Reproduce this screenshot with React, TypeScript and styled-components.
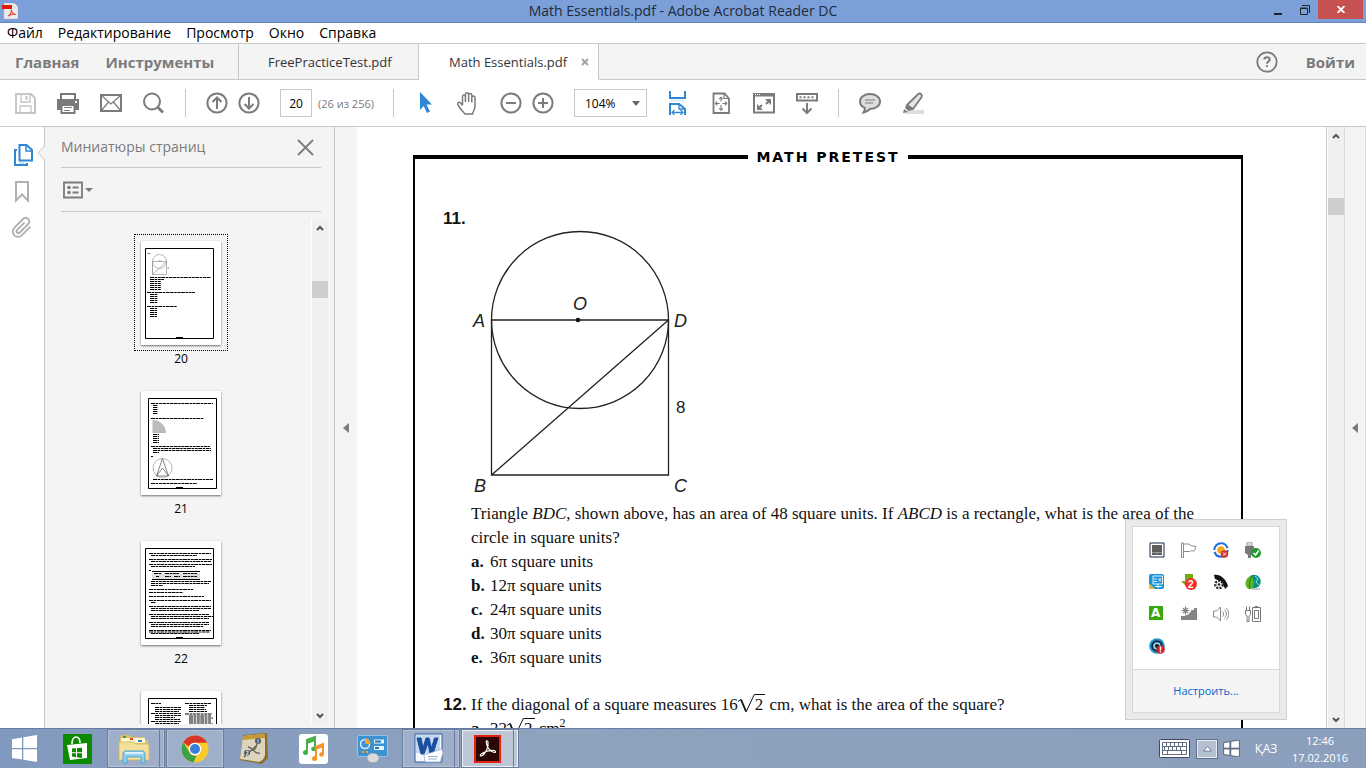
import React from 'react';
import styled, { createGlobalStyle, css } from 'styled-components';

const UI = '"Open Sans", "Noto Sans", sans-serif';
const SANS = '"Liberation Sans", Arial, sans-serif';
const SERIF = '"Liberation Serif", "Times New Roman", serif';
const GRAY = '#7b7b7b';
const LINE = '#c8c8c8';

const GlobalStyle = createGlobalStyle`
  * { box-sizing: border-box; }
  body { margin: 0; font-family: ${UI}; background: #fff; color: #000; }
  button { border: 0; padding: 0; margin: 0; background: none; font: inherit; color: inherit; cursor: pointer; }
  svg { display: block; flex: none; }
`;

const Desktop = styled.div`
  display: flex;
  flex-direction: column;
  height: 100vh;
  position: relative;
  overflow: hidden;
`;

/* ---------- window chrome ---------- */

const TitleBar = styled.header`
  display: grid;
  grid-template-columns: 1fr auto 1fr;
  height: 23px;
  flex: none;
  background: #7a9fd9;
  border-bottom: 1px solid #6283bd;
`;
const AppIcon = styled.div`
  padding: 3px 2px;
`;
const Title = styled.h1`
  margin: 0;
  font-size: 14px;
  line-height: 22px;
  font-weight: 400;
  color: #222b3a;
`;
const WindowButtons = styled.div`
  display: flex;
  justify-content: flex-end;
  padding-right: 3px;
`;
const WindowButton = styled.button<{ $close?: boolean }>`
  display: grid;
  place-items: center;
  width: ${p => (p.$close ? 45 : 27)}px;
  height: 19px;
  background: ${p => (p.$close ? '#c75050' : 'transparent')};
`;

const MenuBar = styled.nav`
  display: flex;
  gap: 15px;
  height: 21px;
  flex: none;
  padding-left: 7px;
  border-bottom: 1px solid ${LINE};
  button { font-size: 14px; line-height: 20px; }
`;

const TabBar = styled.nav`
  display: flex;
  height: 36px;
  flex: none;
  background: #f4f4f4;
`;
const TabHome = styled.div`
  display: flex;
  gap: 26px;
  width: 239px;
  padding-left: 15px;
  border-right: 1px solid ${LINE};
  border-bottom: 1px solid ${LINE};
`;
const TabLink = styled.button`
  font-size: 15px;
  line-height: 20px;
  font-weight: 700;
  color: ${GRAY};
`;
const FileTab = styled.div<{ $active?: boolean }>`
  display: flex;
  align-items: center;
  justify-content: space-between;
  width: 180px;
  padding: 0 9px 0 ${p => (p.$active ? 30 : 29)}px;
  border-right: 1px solid ${LINE};
  border-bottom: 1px solid ${p => (p.$active ? '#fff' : LINE)};
  background: ${p => (p.$active ? '#fff' : 'transparent')};
  font-size: 13px;
  color: #333;
`;
const TabRight = styled.div`
  display: flex;
  flex: 1;
  justify-content: flex-end;
  align-items: center;
  gap: 28px;
  padding-right: 11px;
  border-bottom: 1px solid ${LINE};
`;

/* ---------- toolbar ---------- */

const Toolbar = styled.div`
  display: flex;
  align-items: center;
  gap: 19px;
  height: 47px;
  flex: none;
  padding-left: 13px;
  border-bottom: 1px solid ${LINE};
`;
const Pair = styled.div<{ $tight?: boolean }>`
  display: flex;
  align-items: center;
  gap: ${p => (p.$tight ? 6 : 8)}px;
`;
const Tool = styled.button`
  width: 24px;
  height: 24px;
`;
const Separator = styled.div`
  width: 1px;
  height: 28px;
  background: ${LINE};
`;
const fieldBox = css`
  height: 28px;
  border: 1px solid ${LINE};
  border-radius: 0;
  background: #fff;
  color: #000;
  font-family: ${UI};
  font-size: 12px;
`;
const PageField = styled.input`
  ${fieldBox}
  width: 32px;
  padding: 0;
  text-align: center;
`;
const PageCount = styled.label`
  font-size: 11px;
  width: 56px;
  white-space: nowrap;
  color: ${GRAY};
`;
const ZoomBox = styled.div`
  display: grid;
  align-items: center;
  width: 73px;
  select, svg { grid-area: 1 / 1; }
  svg { justify-self: end; margin-right: 7px; pointer-events: none; }
`;
const ZoomSelect = styled.select`
  ${fieldBox}
  appearance: none;
  width: 73px;
  padding: 0 10px;
`;

/* ---------- work area ---------- */

const WorkArea = styled.main`
  display: flex;
  flex: 1;
  min-height: 0;
`;
const Rail = styled.nav`
  display: flex;
  flex-direction: column;
  align-items: center;
  gap: 12px;
  width: 45px;
  padding-top: 16px;
  border-right: 1px solid ${LINE};
  position: relative;
  button { width: 24px; height: 24px; }
`;
const Notch = styled.svg`
  position: absolute;
  right: -1px;
  top: 18px;
`;
const Panel = styled.aside`
  display: flex;
  flex-direction: column;
  width: 290px;
  background: #f4f4f4;
  border-right: 1px solid ${LINE};
`;
const PanelHead = styled.div`
  display: flex;
  align-items: center;
  justify-content: space-between;
  height: 41px;
  flex: none;
  margin: 0 13px 0 16px;
  padding-right: 7px;
  border-bottom: 1px solid ${LINE};
`;
const PanelTitle = styled.h2`
  margin: 0;
  font-size: 14px;
  line-height: 20px;
  font-weight: 400;
  color: ${GRAY};
`;
const PanelTools = styled.div`
  display: flex;
  align-items: center;
  height: 44px;
  flex: none;
  margin: 0 13px 0 16px;
  border-bottom: 1px solid ${LINE};
`;
const PanelBody = styled.div`
  display: flex;
  flex: 1;
  min-height: 0;
  margin: 7px 6px 4px;
`;
const ThumbList = styled.ol`
  display: flex;
  flex-direction: column;
  align-items: center;
  gap: 17px;
  flex: 1;
  margin: 0;
  padding: 15px 0 0;
  list-style: none;
  overflow: hidden;
`;
const ThumbItem = styled.li`
  display: flex;
  flex-direction: column;
  align-items: center;
  flex: none;
  font-size: 12px;
  line-height: 16px;
`;
const ThumbFrame = styled.button<{ $current?: boolean }>`
  display: grid;
  place-items: center;
  width: 94px;
  height: 117px;
  border: 1px dotted ${p => (p.$current ? '#000' : 'transparent')};
`;
const Sheet = styled.svg`
  background: #fff;
  box-shadow: 0 1px 2px rgba(0, 0, 0, 0.55);
`;

const ScrollTrack = styled.div`
  display: flex;
  flex-direction: column;
  align-items: center;
  width: 17px;
  background: #f0f0f0;
  border-left: 1px solid #fff;
`;
const ScrollButton = styled.button`
  display: grid;
  place-items: center;
  width: 16px;
  height: 17px;
`;
const ScrollThumb = styled.div<{ $offset: number }>`
  width: 16px;
  height: 17px;
  margin: ${p => p.$offset}px 0 auto;
  background: #cdcdcd;
`;
const Splitter = styled.button<{ $framed?: boolean }>`
  display: grid;
  place-items: center;
  width: 22px;
  background: #f4f4f4;
  border: solid #dadada;
  border-width: ${p => (p.$framed ? '0 1px' : '0')};
`;

/* ---------- document page ---------- */

const Page = styled.article`
  flex: 1;
  min-width: 0;
  padding: 28px 83px 0 56px;
  overflow: hidden;
  border-right: 1px solid ${LINE};
  display: flex;
  flex-direction: column;
`;
const RunningHead = styled.div`
  display: flex;
  align-items: center;
  gap: 8px;
  height: 4px;
  flex: none;
  &::before, &::after { content: ''; flex: 1; height: 4px; background: #000; }
`;
const RunningTitle = styled.h2`
  margin: 0;
  font: bold 14px/20px "DejaVu Sans", sans-serif;
  letter-spacing: 2px;
`;
const Frame = styled.div`
  flex: 1;
  border: solid #000;
  border-width: 0 2px;
  padding: 48px 26px 0 28px;
`;
const Question = styled.section`
  display: grid;
  grid-template-columns: 28px 1fr;
  margin-bottom: 23px;
  font: 17px/24px ${SERIF};
  color: #111;
`;
const QuestionNumber = styled.div`
  font: bold 17px/24px ${SANS};
`;
const Figure = styled.svg`
  margin-top: 21px;
`;
const QuestionText = styled.p`
  margin: 0;
`;
const Answers = styled.ol`
  margin: 0;
  padding: 0;
  list-style: none;
`;
const Answer = styled.li`
  display: grid;
  grid-template-columns: 19px 1fr;
`;
const Radical = styled.span`
  white-space: nowrap;
  svg { display: inline-block; vertical-align: -3px; }
  span { border-top: 1px solid #111; padding-right: 2px; }
`;
const Power = styled.sup`
  font-size: 12px;
  line-height: 0;
`;

/* ---------- notification flyout ---------- */

const Flyout = styled.div`
  position: absolute;
  right: 79px;
  bottom: 48px;
  width: 162px;
  padding: 6px;
  background: #eaeaea;
  border: 1px solid #cfcfcf;
`;
const FlyoutInner = styled.div`
  background: #fff;
  border: 1px solid #d9d9d9;
`;
const IconGrid = styled.div`
  display: grid;
  grid-template-columns: repeat(4, 16px);
  grid-auto-rows: 16px;
  gap: 16px;
  padding: 15px 15px 15px 16px;
  button { width: 16px; height: 16px; }
`;
const FlyoutFoot = styled.div`
  display: grid;
  place-items: center;
  height: 43px;
  background: #f4f4f4;
  border-top: 1px solid #d9d9d9;
  a { font-size: 11px; line-height: 16px; color: #06c; text-decoration: none; }
`;

/* ---------- taskbar ---------- */

const Taskbar = styled.footer`
  display: flex;
  height: 40px;
  flex: none;
  background: linear-gradient(90deg, #8299bf, #8fa2be 40%, #8b9fbd);
  border-top: 1px solid #657da4;
`;
const StartButton = styled.button`
  display: grid;
  place-items: center;
  width: 48px;
`;
const Apps = styled.div`
  display: flex;
  flex: 1;
  gap: 1px;
`;
const AppButton = styled.button<{ $running?: boolean; $active?: boolean }>`
  display: flex;
  width: 58px;
  ${p => p.$running && css`
    background: ${p.$active ? '#bcc6d5' : '#9fafc9'};
    border: 1px solid #6a7d9c;
    box-shadow: inset 0 0 0 1px ${p.$active ? '#edf1f6' : '#b5c2d6'};
  `}
`;
const AppFace = styled.span<{ $stacked?: boolean }>`
  display: grid;
  place-items: center;
  flex: 1;
  height: 100%;
  margin-right: ${p => (p.$stacked ? 4 : 0)}px;
  border-right: ${p => (p.$stacked ? '1px solid #6a7d9c' : '0')};
`;
const Tray = styled.div`
  display: flex;
  align-items: center;
  padding-right: 18px;
  color: #fff;
  font-size: 12px;
  line-height: 17px;
`;
const TrayItem = styled.button<{ $w: number }>`
  display: grid;
  place-items: center;
  width: ${p => p.$w}px;
  height: 39px;
`;
const TrayUp = styled.span`
  display: grid;
  place-items: center;
  width: 22px;
  height: 20px;
  background: #b5c0d0;
  border: 1px solid #5f7190;
  box-shadow: inset 0 0 0 1px #e9edf3;
`;
const Clock = styled.button`
  width: 56px;
  font-size: 11px;
  text-align: center;
  white-space: nowrap;
`;

/* ---------- drawings ---------- */

type IconProps = { children: React.ReactNode; s?: number; stroke?: string };
const Ico = ({ children, s = 24, stroke = GRAY }: IconProps) => (
  <svg width={s} height={s} viewBox={`0 0 ${s} ${s}`} fill="none" stroke={stroke} strokeWidth="2" aria-hidden="true">
    {children}
  </svg>
);

const Chevron = ({ down }: { down?: boolean }) => (
  <svg width="8" height="6" viewBox="0 0 8 6" fill="none" stroke="#555" strokeWidth="2" aria-hidden="true">
    <path d={down ? 'M1 1l3 3 3-3' : 'M1 5l3-3 3 3'} />
  </svg>
);
const LeftCaret = () => (
  <svg width="6" height="10" viewBox="0 0 6 10" aria-hidden="true"><path d="M6 0v10L0 5z" fill="#7b7b7b" /></svg>
);

const PdfMini = () => (
  <svg width="16" height="16" viewBox="0 0 16 16" aria-hidden="true">
    <path d="M2 0h10l4 4v12H2z" fill="#ecebea" stroke="#c9c5c3" strokeWidth=".6" />
    <path d="M12 0v4h4z" fill="#fff" stroke="#bbb" strokeWidth=".5" />
    <path d="M0 2h10v4H0z" fill="#e11b0c" />
    <path d="M6 13c2-1 3.500-4 3.300-6.500M9.300 6.500C9.500 9 11 11 14 11.500M6 13c2-1.500 5-2 8-1.500" stroke="#e0453a" fill="none" strokeWidth="1.100" />
  </svg>
);

const SaveIcon = () => (
  <Ico stroke="#c6c6c6"><path d="M3 3h15l4 4v15H3z" /><path d="M8 3v8h9V3M7 22v-7h11v7" strokeWidth="1.300" /><path d="M13.500 5v4" /></Ico>
);
const PrintIcon = () => (
  <Ico><path d="M5 8V3h14v5" /><path d="M1 8h22v11h-4v-3H5v3H1z" fill={GRAY} stroke="none" /><path d="M5.500 14h13v8h-13z" fill="#fff" /><path d="M8 16.500h8M8 19.500h6" strokeWidth="1" /><path d="M19 11h2" stroke="#fff" /></Ico>
);
const MailIcon = () => (
  <Ico><path d="M2 4h20v16H2z" /><path d="M2.500 4.500L12 13l9.500-8.500M2.500 19.500l7-8.500M21.500 19.500l-7-8.500" strokeWidth="1.200" /></Ico>
);
const SearchIcon = () => (
  <Ico><circle cx="10" cy="10.500" r="8" /><path d="M15.500 16l5.500 5.500" strokeWidth="2.800" /></Ico>
);
const CircleIcon = ({ d }: { d: string }) => (
  <Ico><circle cx="12" cy="12" r="9.600" /><path d={d} /></Ico>
);
const PointerIcon = () => (
  <svg width="24" height="24" viewBox="0 0 24 24" aria-hidden="true"><path d="M7 1l12 12.500h-5.500l3.500 7-3 1.500-3.300-7L7 19z" fill="#2f86d2" /></svg>
);
const HandIcon = () => (
  <Ico>
    <path d="M7.500 14V5.500c0-2 2.900-2 2.900 0V11M10.400 11V3.500c0-2.200 3.200-2.200 3.200 0V11M13.600 11V4c0-2 3.200-2 3.200 0v7.500M16.800 11.500V6.500c0-2 3.200-2 3.200 0V15c0 3.500-1.500 4.500-2.500 8H10c-2-2-4.500-5-7-9-1.300-2.600 1.600-3.300 2.700-2L7.500 14.500" transform="translate(-1 0)" strokeWidth="1.500" />
  </Ico>
);
const FitWidthIcon = () => (
  <Ico stroke="#2f86d2"><path d="M4 0v7h15V0M4 24V13h9l6 5v6" /><path d="M13 13v5h6M7 21.500h9" strokeWidth="1.300" /><path d="M8.500 19L6 21.500 8.500 24M14.500 19l2.500 2.500-2.500 2.500" strokeWidth="1.200" /><path d="M4 9.500h15" stroke="#dcebf7" /></Ico>
);
const FitPageIcon = () => (
  <Ico><path d="M4.500 2.500h11l4.500 5v14.500H4.500z" strokeWidth="1.800" /><path d="M15 2.500v5h5" strokeWidth="1.200" /><path d="M12 6.500v4M12 14v5M6.500 12.500h4M13.500 12.500h4.500M10.200 8.200L12 6.400l1.800 1.800M10.200 17.300l1.800 1.800 1.800-1.800M8.200 10.700l-1.800 1.800 1.800 1.800M16 10.700l1.800 1.800-1.800 1.800" strokeWidth="1.100" /></Ico>
);
const FullScreenIcon = () => (
  <Ico><path d="M2 3h20v18.500H2z" /><path d="M2 4h20" strokeWidth="3" /><path d="M3 3.500h5" stroke="#fff" strokeWidth="1" strokeDasharray="1 1" /><path d="M13 8h6v6zM5 13v6h6z" fill={GRAY} stroke="none" /><path d="M17 10l-3 3M7 17l3-3" /></Ico>
);
const ReadIcon = () => (
  <Ico><path d="M2 3h20v6.500H2z" /><path d="M4.500 6.200h15" strokeDasharray="2 2" /><path d="M12 12v10M7.500 17.500L12 22l4.500-4.500" /></Ico>
);
const CommentIcon = () => (
  <Ico><path d="M12 3c6 0 10 3.300 10 7.500S18 18 12 18c-1.500 1.500-3.500 3-6.500 3.500 1-1.500 1.500-3 1.300-4.500C3.500 15.500 2 13 2 10.500 2 6.300 6 3 12 3z" fill="#dedede" /><path d="M7 9h10M7 12h8" strokeWidth="1.200" /></Ico>
);
const HighlightIcon = () => (
  <Ico><path d="M6 19h17v4H4z" fill="#dedede" stroke="none" /><path d="M6 14L17.500 2.800c1.500-1 4.500 1 3 3.500L12 18z" fill="#e6e6e6" strokeWidth="1.800" /><path d="M6 13.500l6 4.500-4 1.500-3.500-2.500z" fill={GRAY} strokeWidth="1" /><path d="M3 18l4 3-5 1z" fill={GRAY} stroke="none" /></Ico>
);

const PagesIcon = () => (
  <Ico stroke="#2f86d2"><path d="M9.500 2h7l5.500 5v10.500H9.500z" /><path d="M16 2v6h6" strokeWidth="1.500" /><path d="M7 7H5v15h12v-2" /><path d="M9 20h5" stroke="#cfe2f3" /></Ico>
);
const BookmarkIcon = () => <Ico stroke="#b0b0b0"><path d="M6 3h12v18.500l-6-6-6 6z" /></Ico>;
const ClipIcon = () => (
  <Ico stroke="#b0b0b0"><path d="M20.400 11.700l-8.600 8.600a5.300 5.300 0 0 1-7.500-7.500L13 4a3.600 3.600 0 0 1 5.200 5L9.800 17.500a1.800 1.800 0 0 1-2.600-2.600l7.300-7.300" strokeWidth="1.900" /></Ico>
);

/* Miniature pages: words are dashes, each entry is [x, y, length]. */
const Words = ({ rows, w = 1 }: { rows: number[][]; w?: number }) => (
  <g stroke="#000" strokeWidth={w} strokeDasharray="4 .6 2.500 .7 3 .5">
    {rows.map(([x, y, l], i) => <path key={i} d={`M${x} ${y}h${l}`} />)}
  </g>
);
const shortRows = (y: number, n: number, x: number, l: number) =>
  Array.from({ length: n }, (_, i) => [x, y + i * 2, l]);

const ThumbPage = ({ n }: { n: number }) => {
  const odd = n % 2 === 1;
  const fx = odd ? 7 : 4;
  return (
    <Sheet width="80" height="104" viewBox="0 0 80 104" aria-hidden="true">
      <path d={`M${fx}.500 7.500h68v90h-68z`} fill="none" stroke="#000" />
      <path d="M35 97h7" stroke="#000" strokeWidth="2" />
      {n === 20 && (
        <g>
          <g fill="none" stroke="#999" strokeWidth=".7"><circle cx="18.500" cy="20.500" r="7" /><path d="M11.500 20.500h14v13h-14zl0 13 14-13" /></g>
          <path d="M6.500 12.500h3M18 20h1.500M26.500 27h1.500" stroke="#777" />
          <Words rows={[[9, 36.5, 61], [9, 38.5, 14], ...shortRows(40.5, 5, 9, 11), [6, 51.5, 48], ...shortRows(53.5, 5, 9, 8), [6, 65.5, 30], ...shortRows(67.5, 5, 9, 7)]} />
        </g>
      )}
      {n === 21 && (
        <g>
          <Words rows={[[10, 12.5, 62], ...shortRows(14.500, 5, 12, 5), [10, 27.5, 53], ...shortRows(43.5, 5, 12, 6), [10, 55.5, 59], [12, 57.5, 58], [12, 59.5, 58], [12, 61.5, 6], [10, 65.5, 2], [12, 88.5, 60], [10, 92.5, 46]]} />
          <path d="M11.500 42V29c8 0 13.500 6 13.500 13z" fill="#bbb" />
          <g fill="none" stroke="#999" strokeWidth=".7"><circle cx="21.500" cy="77" r="9.500" /><path d="M21.500 67.500l-6 17.500h12zM21.500 77l-6 8M21.500 77l6 8" stroke="#555" /></g>
        </g>
      )}
      {n === 22 && (
        <g>
          <Words rows={[[8, 12.5, 62], [10, 14.5, 46], [8, 18.5, 63], [10, 20.5, 60], [8, 23.5, 63], [10, 25.5, 44], [8, 29.5, 2], [10, 40.5, 60], [10, 42.500, 58], [10, 44.500, 12], [8, 48.5, 44], [8, 51.5, 34], [8, 55.5, 55], [8, 59.5, 62], [10, 61.5, 5], [8, 65.5, 62], [10, 67.5, 60], [10, 69.5, 48], [8, 73.5, 60], [10, 75.5, 62], [10, 77.5, 58], [8, 81.5, 60], [10, 83.5, 58], [10, 85.5, 53], [8, 89.5, 62], [8, 91, 61], [10, 92.5, 48]]} />
          <path d="M11 30.500h48M11 38.500h48" stroke="#000" />
          <path d="M11 32h48v6H11z" fill="#ddd" />
          <Words rows={[[13, 32.5, 8], [24, 32.5, 14], [42, 32.5, 14], [15, 35.500, 3], [24, 35.500, 6], [33, 35.500, 6], [42, 35.500, 14]]} />
        </g>
      )}
      {n === 23 && (
        <Words rows={[[10, 12.5, 10], [14, 16.5, 26], [14, 18.5, 26], [14, 20.5, 24], [10, 22.5, 30], [14, 24.500, 26], [14, 26.5, 20], [14, 28.5, 25], [10, 30.5, 30], [14, 32.5, 24], [44, 12.500, 26], [48, 14.500, 18], [48, 16.5, 16], [48, 18.5, 17], [48, 20.5, 18], [44, 23, 27], [48, 25, 22], [48, 27, 24], [48, 29, 22], [48, 31, 22], [48, 33, 24]]} w={1.2} />
      )}
    </Sheet>
  );
};

const RectangleFigure = () => (
  <Figure width="220" height="274" viewBox="0 0 220 274" role="img" aria-label="Circle O over rectangle ABCD">
    <g fill="none" stroke="#222" strokeWidth="1.300">
      <circle cx="109" cy="92" r="88.500" />
      <path d="M20.500 92h177v155h-177zM197.500 92L20.500 247" />
    </g>
    <circle cx="107" cy="92" r="2.300" fill="#111" />
    <g fontFamily={SANS} fontSize="18" fontStyle="italic" fill="#222">
      <text x="2" y="99">A</text>
      <text x="102" y="82">O</text>
      <text x="203" y="99">D</text>
      <text x="3" y="264">B</text>
      <text x="203" y="264">C</text>
      <text x="205" y="185" fontStyle="normal" fontSize="17">8</text>
    </g>
  </Figure>
);

const Sqrt = ({ children }: { children: React.ReactNode }) => (
  <Radical>
    <svg width="17" height="19" viewBox="0 0 17 19" fill="none" stroke="#111" aria-hidden="true">
      <path d="M0 7.500l3-2" /><path d="M3 5.500l5 12" strokeWidth="1.800" /><path d="M8 18L16.300.500h1" />
    </svg>
    <span>{children}</span>
  </Radical>
);

const WindowsLogo = ({ s = 27, edge }: { s?: number; edge?: boolean }) => (
  <svg width={s} height={s} viewBox="0 0 27 27" fill="#fff" stroke={edge ? '#4c5a70' : 'none'} strokeWidth={edge ? 1.4 : 0} aria-hidden="true">
    <path d="M1 4.200l10-1.700V13H1zM12.300 2.300L26 0v13H12.300zM1 14.200h10v10.400L1 23zM12.300 14.200H26V27l-13.700-2.200z" />
  </svg>
);
const StoreIcon = () => (
  <svg width="29" height="30" viewBox="0 0 29 30" aria-hidden="true">
    <path d="M0 0h29v30H0z" fill="#0c8a00" />
    <path d="M4 11l20-2v15L7 26z" fill="#fff" /><path d="M9 10c0-5 2-7 4-7s4 2 4 6" fill="none" stroke="#fff" strokeWidth="1.600" />
    <path d="M9 14.500l4-.3v4H9zM14 14.100l5-.4v4.500h-5zM9 19.200h4v4l-4-.6zM14 19.200h5V24l-5-.7z" fill="#0c8a00" />
  </svg>
);
const ExplorerIcon = () => (
  <svg width="32" height="30" viewBox="0 0 32 30" aria-hidden="true">
    <path d="M2 3l2-2h7l2 2h13v3h4v20H2z" fill="#dfc068" />
    <path d="M3 4h24v5H3z" fill="#fff6d0" /><path d="M5 2h3v2H5z" fill="#2ba84a" /><path d="M12 4h3v2h-3z" fill="#d8442e" /><path d="M20 6h4v2h-4z" fill="#2f86d2" />
    <path d="M1 8h14l3 2h13v16H1z" fill="#f3e09a" stroke="#d2b25a" strokeWidth=".8" />
    <path d="M5 29V20c0-2 1-3 3-3h16c2 0 3 1 3 3v9h-4v-6H9v6z" fill="#8fd0ee" stroke="#4fa4cd" /><path d="M7 19h18" stroke="#d8f1fb" strokeWidth="2" />
  </svg>
);
const ChromeIcon = () => (
  <svg width="28" height="28" viewBox="0 0 28 28" aria-hidden="true">
    <circle cx="14" cy="14" r="13.500" fill="#f7cb2d" />
    <path d="M2.300 7.300A13.500 13.500 0 0 1 26 7.700H14a6.500 6.500 0 0 0-6 4z" fill="#d9352a" />
    <path d="M2.300 7.300l5.900 9.700A6.500 6.500 0 0 0 15.500 20.500L12.500 27.400A13.500 13.500 0 0 1 2.300 7.300z" fill="#3aa24a" />
    <circle cx="14" cy="14" r="6.300" fill="#fff" /><circle cx="14" cy="14" r="5" fill="#3b7fd9" />
  </svg>
);
const JournalIcon = () => (
  <svg width="30" height="31" viewBox="0 0 30 31" aria-hidden="true">
    <path d="M4 2l24-2 1 25-6 6-22-4z" fill="#8d6d27" />
    <path d="M4 3l22-2v21c-1 4-3 6-6 7L1 26z" fill="#dcd4bd" /><path d="M4 3l22-2v4L4 7z" fill="#c59a35" />
    <path d="M5 24l13-12M9 14c5 0 6 8 12 6M8 20c5-6 7 2 10-9" fill="none" stroke="#68645b" strokeWidth="1.300" />
    <circle cx="19" cy="8" r="3" fill="#4b5a66" /><circle cx="8" cy="20" r="3" fill="#4b5a66" />
    <path d="M19 6v4M7 19l2-1v2l-2 2h3" stroke="#fff" fill="none" strokeWidth=".8" />
  </svg>
);
const MusicIcon = () => (
  <svg width="29" height="30" viewBox="0 0 29 30" aria-hidden="true">
    <rect width="29" height="30" rx="3" fill="#fff" />
    <path d="M8 18V6l8-3v11" fill="none" stroke="#44b04a" strokeWidth="2" /><path d="M8 7l8-3v3l-8 3z" fill="#44b04a" /><circle cx="6.500" cy="18.500" r="2.500" fill="#44b04a" /><circle cx="14.500" cy="15" r="2.300" fill="#44b04a" />
    <path d="M17 24V13l7-3v10" fill="none" stroke="#f5922b" strokeWidth="2" /><path d="M17 13l7-3v3l-7 3z" fill="#f5922b" /><circle cx="15.500" cy="24.500" r="2.500" fill="#f5922b" /><circle cx="22.500" cy="20.500" r="2.300" fill="#f5922b" />
  </svg>
);
const ControlIcon = () => (
  <svg width="31" height="28" viewBox="0 0 31 28" aria-hidden="true">
    <rect x=".5" y=".5" width="30" height="21" rx="1.500" fill="#3d92cf" stroke="#8cc8ee" />
    <circle cx="8" cy="9" r="4.500" fill="none" stroke="#d5edfb" strokeWidth="1.500" /><path d="M8 9V3a6 6 0 0 1 5.500 6z" fill="#f2a33a" />
    <path d="M17 6.500h10M17 13h10" stroke="#e5f5ff" strokeWidth="4" /><path d="M18 6.500h6M18 13h4" stroke="#2674b0" strokeWidth="2" />
    <path d="M5 17h2M9 17h2" stroke="#f2a33a" strokeWidth="2" />
    <ellipse cx="16" cy="23" rx="6" ry="4.800" fill="#d9dadc" stroke="#9ea2a8" strokeWidth=".7" />
  </svg>
);
const WordIcon = () => (
  <svg width="30" height="31" viewBox="0 0 30 31" aria-hidden="true">
    <path d="M1 1h27v28H1z" fill="#f6f9fd" stroke="#2c5fa5" /><path d="M2 2h24v18H2z" fill="#c3d7f1" />
    <path d="M3 5l4 16h3l4-11 2 11h3L24 5h-3.500l-3 10L15 5h-3L9 15 7 5z" fill="#1a4f9d" stroke="#1a4f9d" />
    <path d="M10 22l18-6 1 4-3 9H11z" fill="#fff" stroke="#8aa4c8" strokeWidth=".7" /><path d="M14 23.500h10M14 26h9" stroke="#9bb2d2" />
  </svg>
);
const AcrobatIcon = () => (
  <svg width="27" height="28" viewBox="0 0 27 28" aria-hidden="true">
    <path d="M0 0h27v28H0z" fill="#e8210f" /><path d="M2 2h23v24H2z" fill="#2b0705" />
    <path d="M7 21c4-1 8-9 7-14-.4-1.600-2-1.400-1.800.3C12.700 12 16 17 20.500 17.500c1.500 0 1.400-1.800-.5-2-4-.3-9 1-12.500 3.200-1.500 1-1.600 2.300-.5 2.300z" fill="none" stroke="#fff" strokeWidth="1.200" />
  </svg>
);

const TRAY_ICONS: { name: string; art: React.ReactNode }[] = [
  { name: 'Touchpad', art: <g><path d="M1 1h14v14H1z" fill="#fff" stroke="#142840" strokeWidth="1" /><path d="M3 3h10v10H3z" fill="#5d5d5d" /><path d="M3 10.500h10M8 10.500V13" stroke="#999" strokeWidth="1" /></g> },
  { name: 'Action center', art: <path d="M.500 1h2v14.500h-2zM2.500 2h5.500c1 2 4 2 7 2.500-1 1-.5 4-2 4.500-2 0-3-.5-4.500.500h-6" fill="#fff" stroke="#8c8c8c" /> },
  { name: 'Sync', art: <g><circle cx="8" cy="8" r="6.700" fill="#fff" stroke="#1b6fd8" strokeWidth="2" strokeDasharray="19 2" /><circle cx="8" cy="8" r="3.800" fill="#f9a51b" /><circle cx="11.500" cy="12" r="3.800" fill="#d22f2f" /><path d="M10 10.500l3 3M13 10.500l-3 3" stroke="#fff" /></g> },
  { name: 'Safely remove', art: <g><path d="M2 0h5v4H2z" fill="#ddd" stroke="#888" strokeWidth=".7" /><path d="M0 4h9v7l-3 2v3H3v-3l-3-2z" fill="#777" /><circle cx="11" cy="11" r="5" fill="#1f9a2f" /><path d="M8.500 11l2 2 3.300-4.500" fill="none" stroke="#fff" strokeWidth="1.600" /></g> },
  { name: 'Graphics', art: <g><rect width="15" height="15" rx="2" fill="#1593dd" /><path d="M0 9l6 6H2a2 2 0 0 1-2-2z" fill="#f0b840" /><path d="M4 2h9.500v8H4zM5 5h3M5 7.500h3M9.500 4l2.500 3.500M12 4L9.500 7.500M6 12.500h7M9 10v4" stroke="#fff" fill="none" strokeWidth=".9" /></g> },
  { name: 'Downloads', art: <g><path d="M4 0h8v7H4z" fill="#6fae0c" /><path d="M0 7h14l-7 7z" fill="#6fae0c" /><circle cx="10" cy="10" r="6" fill="#fb2b2b" /><text x="7" y="13.500" fill="#fff" fontSize="10" fontWeight="700" fontFamily={SANS}>2</text></g> },
  { name: 'Phone', art: <g><path d="M1 1c6-1 12 4 14 11l-3 3C11 10 6 6 2 5z" fill="#111" /><circle cx="6" cy="10.500" r="3.700" fill="#fff" stroke="#222" strokeWidth="2.400" strokeDasharray="2 1.200" /><circle cx="6" cy="10.500" r="1.300" fill="#222" /></g> },
  { name: 'Antivirus', art: <g><circle cx="9" cy="7.500" r="6.800" fill="#0f8f8a" /><path d="M10 2l3 3-2 3 3 3" stroke="#8fe3c8" fill="none" /><path d="M7 2c-8 1-8 12-3 13 5 0 6-6 3-13z" fill="#5ab51e" /><path d="M7 2C4 8 4 12 5 15" stroke="#2c7a0b" fill="none" /><path d="M6 15h9" stroke="#9a9a9a" /></g> },
  { name: 'Language', art: <g><path d="M0 0h14v14H0z" fill="#38a80b" /><text x="2" y="11" fill="#fff" fontSize="12" fontWeight="700" fontFamily='"DejaVu Sans", sans-serif'>A</text></g> },
  { name: 'Network', art: <g><path d="M0 10h4V8h3V6h3V4h3V2h3v12H0z" fill="#858585" /><circle cx="4.500" cy="4.500" r="4.800" fill="#fff" /><path d="M4.500.500v8M.500 4.500h8M2 2l5 5M7 2L2 7" stroke="#858585" strokeWidth="1.200" /></g> },
  { name: 'Volume', art: <path d="M.500 5h3l4-4v14l-4-4h-3zM9.500 5.500c1.500 1.500 1.500 3.500 0 5M11.500 3.500c2.500 3 2.500 6 0 9M13.500 2c3 4 3 8 0 12" fill="none" stroke="#8c8c8c" /> },
  { name: 'Power', art: <g fill="#fff" stroke="#777"><path d="M7.500 1.500h8v14h-8zM9.500 4.500h4v8h-4zM10 .500h3" /><path d="M.500 4.500h5v4l-1.500 1.500v5.500H2V10L.500 8.500zM1.500.500v4M4.500.500v4" /></g> },
  { name: 'Security', art: <g><circle cx="8" cy="8" r="7.800" fill="#2497c8" /><circle cx="8" cy="8" r="5.200" fill="#8bdcf7" /><circle cx="8" cy="8" r="4.800" fill="none" stroke="#0a2540" strokeWidth="2" /><circle cx="8" cy="8" r="2" fill="#051520" /><circle cx="11.500" cy="11.500" r="4.300" fill="#cf2424" /><path d="M11.500 8.500v4M11.500 13.300v1.200" stroke="#fff" strokeWidth="1.500" /></g> },
];

const KeyboardTray = () => (
  <svg width="31" height="19" viewBox="0 0 31 19" aria-hidden="true">
    <rect x=".5" y=".5" width="30" height="18" rx="1" fill="#fff" stroke="#3d4a5f" />
    <path d="M3.500 3.500h24v12h-24zM3.500 7.500h24M3.500 11.500h24M7.500 3.500v4M11.500 3.500v4M15.500 3.500v4M19.500 3.500v4M23.500 3.500v4M5.500 7.500v4M9.500 7.500v4M13.500 7.500v4M17.500 7.500v4M21.500 7.500v4M8.500 11.500v4M22.500 11.500v4" fill="none" stroke="#5f6b80" />
  </svg>
);

const APPS = [
  { name: 'Store', icon: <StoreIcon /> },
  { name: 'Explorer', icon: <ExplorerIcon />, running: true, stacked: true },
  { name: 'Chrome', icon: <ChromeIcon />, running: true },
  { name: 'Journal', icon: <JournalIcon /> },
  { name: 'Music', icon: <MusicIcon /> },
  { name: 'Control panel', icon: <ControlIcon /> },
  { name: 'Word', icon: <WordIcon />, running: true, stacked: true },
  { name: 'Acrobat Reader', icon: <AcrobatIcon />, running: true, stacked: true, active: true },
];

const THUMBS = [
  { page: 20, label: '20' },
  { page: 21, label: '21' },
  { page: 22, label: '22' },
  { page: 23 },
];

const OPTIONS = [['a', '6'], ['b', '12'], ['c', '24'], ['d', '30'], ['e', '36']];

export default function App() {
  return (
    <Desktop>
      <GlobalStyle />
      <TitleBar>
        <AppIcon><PdfMini /></AppIcon>
        <Title>Math Essentials.pdf - Adobe Acrobat Reader DC</Title>
        <WindowButtons>
          <WindowButton aria-label="Minimize"><svg width="8" height="14" viewBox="0 0 8 14"><path d="M0 10h8v2H0z" fill="#222" /></svg></WindowButton>
          <WindowButton aria-label="Restore"><svg width="10" height="10" viewBox="0 0 10 10" fill="none" stroke="#222"><path d="M.500 3.500h7v6h-7zM.500 3h7M2 .500h7.500V8" /></svg></WindowButton>
          <WindowButton $close aria-label="Close"><svg width="8" height="7" viewBox="0 0 8 7" stroke="#fff" strokeWidth="1.800"><path d="M.500 0l7 7M7.500 0l-7 7" /></svg></WindowButton>
        </WindowButtons>
      </TitleBar>
      <MenuBar>
        {['Файл', 'Редактирование', 'Просмотр', 'Окно', 'Справка'].map(m => <button key={m}>{m}</button>)}
      </MenuBar>
      <TabBar>
        <TabHome>
          <TabLink>Главная</TabLink>
          <TabLink>Инструменты</TabLink>
        </TabHome>
        <FileTab><button>FreePracticeTest.pdf</button></FileTab>
        <FileTab $active>
          <button>Math Essentials.pdf</button>
          <button aria-label="Close tab"><svg width="8" height="8" viewBox="0 0 8 8" stroke="#a3a3a3" strokeWidth="2"><path d="M1 1l6 6M7 1L1 7" /></svg></button>
        </FileTab>
        <TabRight>
          <button aria-label="Help">
            <Ico s={22}><circle cx="11" cy="11" r="9.700" strokeWidth="1.800" /><path d="M8.300 8.600c0-3.200 5.400-3.200 5.400 0 0 1.900-2.700 2-2.700 4.200M11 14.200v1.900" /></Ico>
          </button>
          <TabLink>Войти</TabLink>
        </TabRight>
      </TabBar>
      <Toolbar>
        <Tool aria-label="Save"><SaveIcon /></Tool>
        <Tool aria-label="Print"><PrintIcon /></Tool>
        <Tool aria-label="Mail"><MailIcon /></Tool>
        <Tool aria-label="Search"><SearchIcon /></Tool>
        <Separator />
        <Pair>
          <Tool aria-label="Previous page"><CircleIcon d="M12 18V7M7.500 11L12 6.500l4.500 4.500" /></Tool>
          <Tool aria-label="Next page"><CircleIcon d="M12 6v11M7.500 13l4.500 4.500 4.500-4.500" /></Tool>
        </Pair>
        <Pair $tight>
          <PageField id="page" defaultValue="20" />
          <PageCount htmlFor="page">(26 из 256)</PageCount>
        </Pair>
        <Separator />
        <Tool aria-label="Select"><PointerIcon /></Tool>
        <Tool aria-label="Hand"><HandIcon /></Tool>
        <Pair>
          <Tool aria-label="Zoom out"><CircleIcon d="M7 12h10" /></Tool>
          <Tool aria-label="Zoom in"><CircleIcon d="M7 12h10M12 7v10" /></Tool>
        </Pair>
        <ZoomBox>
          <ZoomSelect aria-label="Zoom" defaultValue="104%"><option>104%</option></ZoomSelect>
          <svg width="8" height="5" viewBox="0 0 8 5" aria-hidden="true"><path d="M0 0h8L4 5z" fill="#666" /></svg>
        </ZoomBox>
        <Tool aria-label="Fit width"><FitWidthIcon /></Tool>
        <Tool aria-label="Fit page"><FitPageIcon /></Tool>
        <Tool aria-label="Full screen"><FullScreenIcon /></Tool>
        <Tool aria-label="Read mode"><ReadIcon /></Tool>
        <Separator />
        <Tool aria-label="Comment"><CommentIcon /></Tool>
        <Tool aria-label="Highlight"><HighlightIcon /></Tool>
      </Toolbar>

      <WorkArea>
        <Rail>
          <button aria-label="Page thumbnails"><PagesIcon /></button>
          <button aria-label="Bookmarks"><BookmarkIcon /></button>
          <button aria-label="Attachments"><ClipIcon /></button>
          <Notch width="8" height="16" viewBox="0 0 8 16" aria-hidden="true">
            <path d="M8 1L1 8l7 7z" fill="#f4f4f4" /><path d="M7.500 1L1 8l6.500 7" fill="none" stroke={LINE} />
          </Notch>
        </Rail>
        <Panel>
          <PanelHead>
            <PanelTitle>Миниатюры страниц</PanelTitle>
            <button aria-label="Close panel"><svg width="17" height="17" viewBox="0 0 17 17" stroke={GRAY} strokeWidth="1.800"><path d="M1 1l15 15M16 1L1 16" /></svg></button>
          </PanelHead>
          <PanelTools>
            <button aria-label="Options">
              <svg width="32" height="18" viewBox="0 0 32 18" fill="none" stroke={GRAY}>
                <path d="M3 1.500h18v15H3z" strokeWidth="1.800" /><path d="M11.500 6.500h6M11.500 11.500h6" strokeWidth="1.800" />
                <circle cx="8" cy="6.500" r="1.800" fill={GRAY} stroke="none" /><circle cx="8" cy="11.500" r="1.800" fill={GRAY} stroke="none" />
                <path d="M24 7h8l-4 4z" fill={GRAY} stroke="none" />
              </svg>
            </button>
          </PanelTools>
          <PanelBody>
            <ThumbList>
              {THUMBS.map(t => (
                <ThumbItem key={t.page}>
                  <ThumbFrame $current={t.page === 20} aria-label={`Page ${t.page}`}><ThumbPage n={t.page} /></ThumbFrame>
                  {t.label}
                </ThumbItem>
              ))}
            </ThumbList>
            <ScrollTrack>
              <ScrollButton aria-label="Scroll up"><Chevron /></ScrollButton>
              <ScrollThumb $offset={45} />
              <ScrollButton aria-label="Scroll down"><Chevron down /></ScrollButton>
            </ScrollTrack>
          </PanelBody>
        </Panel>
        <Splitter aria-label="Collapse panel"><LeftCaret /></Splitter>
        <Page>
          <RunningHead><RunningTitle>MATH PRETEST</RunningTitle></RunningHead>
          <Frame>
            <Question>
              <QuestionNumber>11.</QuestionNumber>
              <div>
                <RectangleFigure />
                <QuestionText>
                  Triangle <i>BDC</i>, shown above, has an area of 48 square units. If <i>ABCD</i> is a rectangle, what is the area of the circle in square units?
                </QuestionText>
                <Answers>
                  {OPTIONS.map(([k, v]) => <Answer key={k}><b>{k}.</b><span>{v}π square units</span></Answer>)}
                </Answers>
              </div>
            </Question>
            <Question>
              <QuestionNumber>12.</QuestionNumber>
              <div>
                <QuestionText>If the diagonal of a square measures 16<Sqrt>2</Sqrt> cm, what is the area of the square?</QuestionText>
                <Answers><Answer><b>a.</b><span>32<Sqrt>2</Sqrt> cm<Power>2</Power></span></Answer></Answers>
              </div>
            </Question>
          </Frame>
        </Page>
        <ScrollTrack>
          <ScrollButton aria-label="Scroll up"><Chevron /></ScrollButton>
          <ScrollThumb $offset={54} />
          <ScrollButton aria-label="Scroll down"><Chevron down /></ScrollButton>
        </ScrollTrack>
        <Splitter $framed aria-label="Open tools"><LeftCaret /></Splitter>
      </WorkArea>

      <Taskbar>
        <StartButton aria-label="Start"><WindowsLogo /></StartButton>
        <Apps>
          {APPS.map(a => (
            <AppButton key={a.name} aria-label={a.name} $running={a.running} $active={a.active}>
              <AppFace $stacked={a.stacked}>{a.icon}</AppFace>
            </AppButton>
          ))}
        </Apps>
        <Tray>
          <TrayItem $w={36} aria-label="Keyboard"><KeyboardTray /></TrayItem>
          <TrayItem $w={30} aria-label="Hidden icons">
            <TrayUp><svg width="9" height="6" viewBox="0 0 9 6"><path d="M4.500 .500L8.500 5h-8z" fill="#fff" stroke="#55647c" strokeWidth=".8" /></svg></TrayUp>
          </TrayItem>
          <TrayItem $w={18} aria-label="Windows"><WindowsLogo s={17} edge /></TrayItem>
          <TrayItem $w={52}>ҚАЗ</TrayItem>
          <Clock>12:46<br />17.02.2016</Clock>
        </Tray>
      </Taskbar>

      <Flyout>
        <FlyoutInner>
          <IconGrid>
            {TRAY_ICONS.map(t => (
              <button key={t.name} aria-label={t.name}><svg width="16" height="16" viewBox="0 0 16 16" aria-hidden="true">{t.art}</svg></button>
            ))}
          </IconGrid>
          <FlyoutFoot><a href="#customize">Настроить...</a></FlyoutFoot>
        </FlyoutInner>
      </Flyout>
    </Desktop>
  );
}
